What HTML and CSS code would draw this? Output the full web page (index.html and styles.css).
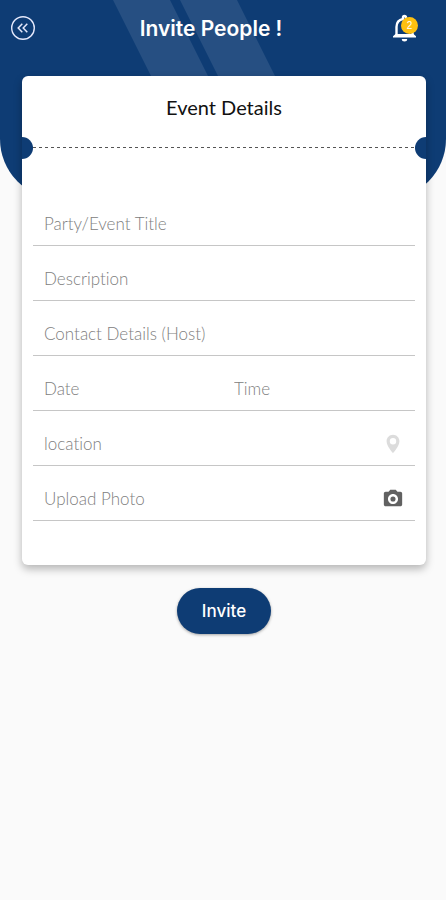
FILE: index.html
```html
<!DOCTYPE html>
<html lang="en">
<head>
<meta charset="utf-8">
<meta name="viewport" content="width=device-width, initial-scale=1">
<title>Invite People</title>
<link rel="stylesheet" href="styles.css">
</head>
<body>
<div class="page">
  <svg class="backdrop-stripes" width="280" height="160" viewBox="0 0 280 160" aria-hidden="true">
    <path d="M113 0H170L250 160H193ZM180 0H237L317 160H260Z" fill="#fff" fill-opacity=".1"/>
  </svg>
  <header class="topbar">
    <button class="icon-button" type="button" aria-label="Back">
      <svg width="26" height="26" viewBox="0 0 26 26" fill="none" stroke="#e4e8fb" stroke-width="1.4">
        <circle cx="13" cy="13" r="11.3"/>
        <path d="M12.3 8.8 8.2 13l4.1 4.2M17.3 8.8 13.2 13l4.1 4.2" stroke-width="1.5"/>
      </svg>
    </button>
    <h1 class="topbar-title">Invite People !</h1>
    <button class="icon-button bell" type="button" aria-label="Notifications">
      <svg width="26" height="28" viewBox="0 0 26 28">
        <path d="M4.500 21V13C4.500 9 7 5.800 11 5V3.500a1.500 1.500 0 0 1 3 0V5C18 5.800 20.500 9 20.500 13V21" fill="none" stroke="#fff" stroke-width="2.400"/>
        <path d="M1 23.500V22.200L3.500 20H21.500L24 22.200V23.500ZM9.800 25H15.200A2.700 2.500 0 0 1 9.800 25Z" fill="#fff"/>
      </svg>
      <span class="badge">2</span>
    </button>
  </header>
  <main class="content">
    <form class="form">
      <section class="card">
        <h2 class="card-title">Event Details</h2>
        <div class="fields">
          <div class="field"><input type="text" aria-label="Party/Event Title" placeholder="Party/Event Title"></div>
          <div class="field"><input type="text" aria-label="Description" placeholder="Description"></div>
          <div class="field"><input type="text" aria-label="Contact Details (Host)" placeholder="Contact Details (Host)"></div>
          <div class="field">
            <input type="text" aria-label="Date" placeholder="Date">
            <input type="text" aria-label="Time" placeholder="Time">
          </div>
          <div class="field">
            <input type="text" aria-label="location" placeholder="location">
            <button class="icon-button" type="button" aria-label="Pick location">
              <svg width="22" height="22" viewBox="0 0 24 24" fill="#dcdcdc"><path d="M12 2C8.130 2 5 5.130 5 9c0 5.250 7 13 7 13s7-7.750 7-13c0-3.870-3.130-7-7-7zm0 10.500a3.500 3.500 0 1 1 0-7 3.500 3.500 0 0 1 0 7z"/></svg>
            </button>
          </div>
          <div class="field">
            <input type="text" aria-label="Upload Photo" placeholder="Upload Photo">
            <button class="icon-button" type="button" aria-label="Choose photo">
              <svg width="22" height="22" viewBox="0 0 24 24" fill="#616161"><circle cx="12" cy="12" r="2.800"/><path d="M9 2 7.170 4H4c-1.100 0-2 .9-2 2v12c0 1.100.9 2 2 2h16c1.100 0 2-.9 2-2V6c0-1.100-.9-2-2-2h-3.170L15 2H9zm3 15.500c-3.040 0-5.500-2.460-5.500-5.500s2.460-5.500 5.500-5.500 5.500 2.460 5.500 5.500-2.460 5.500-5.500 5.500z"/></svg>
            </button>
          </div>
        </div>
      </section>
      <button class="submit" type="submit">Invite</button>
    </form>
  </main>
</div>
</body>
</html>
```
FILE: styles.css
```css
:root {
  --blue: #0e3c74;
  --line: #c6c6c6;
}

* {
  box-sizing: border-box;
}

body {
  margin: 0;
  background: #fafafa;
  color: #111;
  font-family: Lato, "Liberation Sans", sans-serif;
}

.page {
  position: relative;
  isolation: isolate;
  min-height: 100vh;
}

/* Rounded blue panel behind the bar and the top of the card */
.page::before {
  content: "";
  position: absolute;
  z-index: -2;
  inset: 0 0 auto;
  height: 199px;
  border-radius: 0 0 60px 60px;
  background: var(--blue);
}

.backdrop-stripes {
  position: absolute;
  z-index: -1;
  top: 0;
  left: 0;
}

.topbar {
  display: flex;
  align-items: center;
  justify-content: space-between;
  height: 56px;
  padding: 0 28px 0 10px;
}

.topbar-title {
  margin: 0;
  padding-right: 6px;
  color: #fff;
  font-family: Inter, "Liberation Sans", sans-serif;
  font-size: 21px;
  font-weight: 600;
}

.icon-button {
  display: flex;
  flex: none;
  padding: 0;
  border: 0;
  background: none;
  cursor: pointer;
}

.bell {
  position: relative;
}

.badge {
  position: absolute;
  top: 3px;
  right: 0;
  width: 17px;
  height: 17px;
  border-radius: 50%;
  background: #fdc010;
  color: #fff;
  font-size: 10px;
  line-height: 17px;
  text-align: center;
}

.content {
  padding: 20px 20px 0 22px;
}

.form {
  display: flex;
  flex-direction: column;
  align-items: center;
  gap: 23px;
}

.card {
  width: 100%;
  padding-bottom: 44px;
  border-radius: 6px;
  background: #fff;
  box-shadow: 0 4px 8px rgb(0 0 0 / 28%);
}

/* The dashed background is the perforation between the notches */
.card-title {
  position: relative;
  height: 72px;
  margin: 0;
  padding-top: 19px;
  background: repeating-linear-gradient(90deg, #555 0 3px, transparent 3px 6px) 11px 100% / calc(100% - 22px) 1px no-repeat;
  font-size: 20px;
  font-weight: 400;
  line-height: 24px;
  text-align: center;
}

.card-title::before,
.card-title::after {
  content: "";
  position: absolute;
  bottom: -11px;
  width: 11px;
  height: 22px;
  background: var(--blue);
}

.card-title::before {
  left: 0;
  border-radius: 0 11px 11px 0;
}

.card-title::after {
  right: 0;
  border-radius: 11px 0 0 11px;
}

.fields {
  padding: 43px 11px 0;
}

.field {
  display: flex;
  align-items: center;
  gap: 20px;
  height: 55px;
  padding: 12px 11px 0;
  border-bottom: 1px solid var(--line);
}

.field input {
  flex: 1;
  min-width: 0;
  padding: 0;
  border: 0;
  outline: 0;
  background: none;
  color: #333;
  font: 300 17px/24px Lato, "Liberation Sans", sans-serif;
  font-variant-ligatures: none;
}

.field input::placeholder {
  color: #808080;
  opacity: 1;
}

.submit {
  height: 46px;
  padding: 0 25px;
  border: 0;
  border-radius: 23px;
  background: var(--blue);
  box-shadow: 0 1px 3px rgb(0 0 0 / 35%);
  color: #fff;
  font: 500 17px/24px Inter, "Liberation Sans", sans-serif;
  cursor: pointer;
}
```
